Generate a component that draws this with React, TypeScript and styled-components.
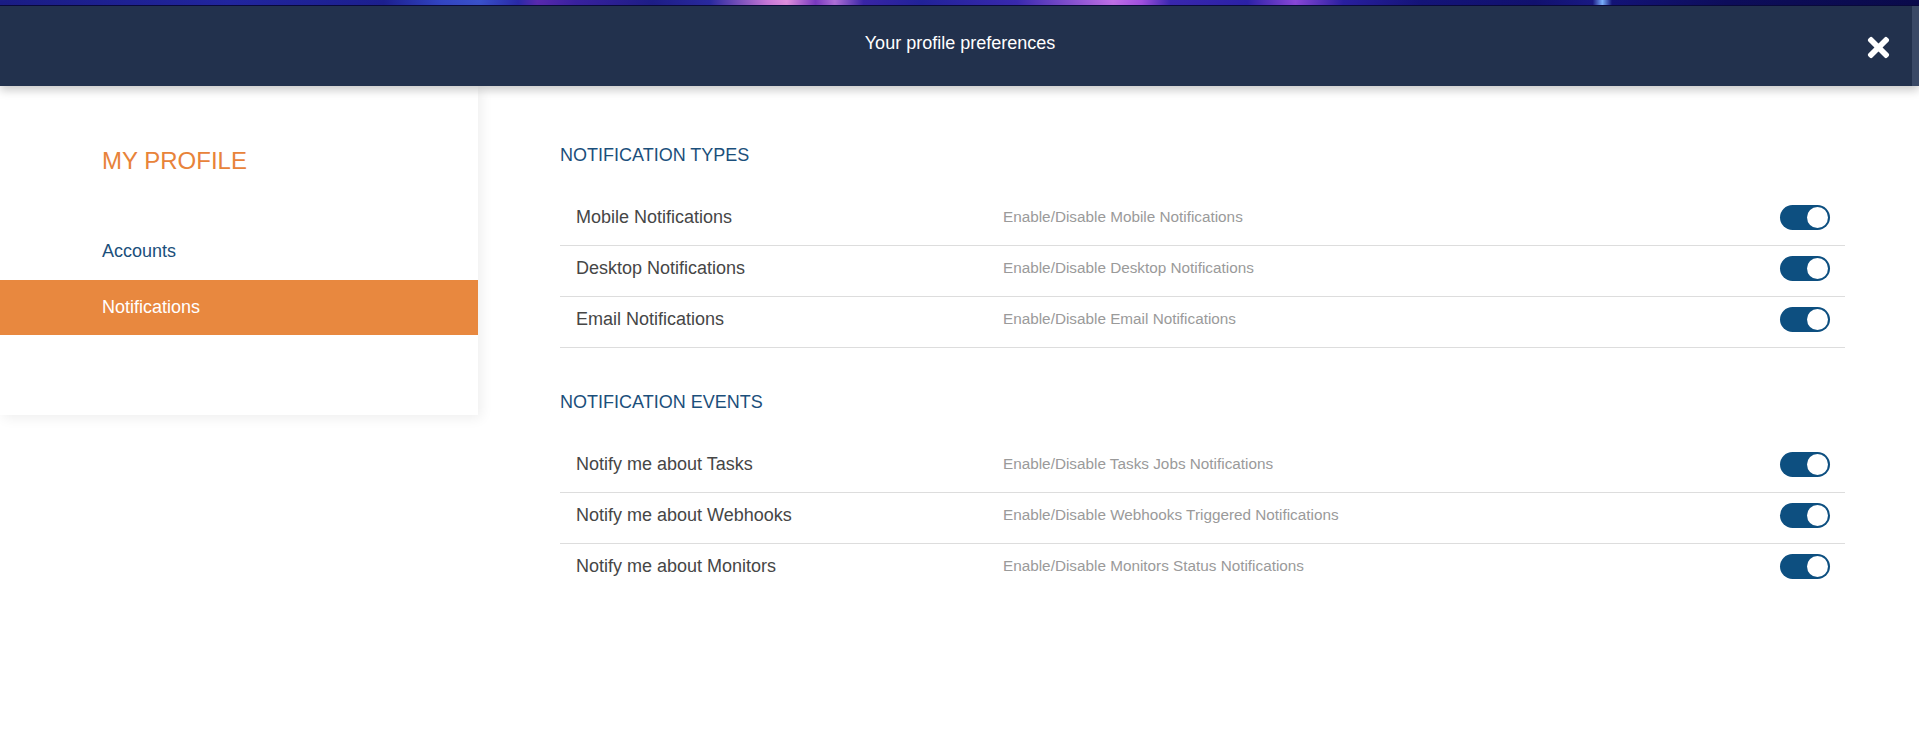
import React, { useState } from "react";
import styled, { createGlobalStyle } from "styled-components";
import { FaTimes } from "react-icons/fa";

const GlobalStyle = createGlobalStyle`
  html, body {
    margin: 0;
    padding: 0;
    background: #ffffff;
    font-family: "Liberation Sans", Arial, sans-serif;
  }
  * { box-sizing: border-box; }
`;

const Page = styled.div`
  width: 1919px;
  min-height: 733px;
  background: #ffffff;
  overflow: hidden;
`;

const BackdropStrip = styled.div`
  height: 6px;
  background: linear-gradient(
    90deg,
    #1b1d86 0%,
    #2226a0 12%,
    #1d2090 20%,
    #3346c4 23%,
    #3a52cc 25%,
    #2a2aa8 27%,
    #5a2ab0 28%,
    #3a22a0 30%,
    #1e1e88 34%,
    #2a2aa0 37%,
    #c878d8 40%,
    #e090e0 41%,
    #7a3ac0 42.5%,
    #b070d8 43.5%,
    #3a26a8 45%,
    #22239a 48%,
    #3a2ab0 53%,
    #c070e8 58%,
    #a050e0 59.5%,
    #3a28b0 61%,
    #2c22a8 65%,
    #8a48d8 67.5%,
    #2a20a0 70%,
    #15157a 74%,
    #121270 80%,
    #1a1a84 83%,
    #7ab0ff 83.5%,
    #141478 84%,
    #0e0e5c 90%,
    #0b0b4c 100%
  );
  border-bottom: 1px solid #0a0a3e;
`;

const HeaderBar = styled.header`
  position: relative;
  z-index: 2;
  display: grid;
  grid-template-columns: 1fr 7px;
  height: 80px;
  box-shadow: 0 4px 9px rgba(0, 0, 0, 0.22);
`;

const HeaderInner = styled.div`
  display: grid;
  grid-template-columns: 1fr auto 1fr;
  align-items: center;
  background: #22314d;
  padding: 0 18px 0 26px;
`;

const HeaderTitle = styled.h1`
  grid-column: 2;
  margin: 0 0 6px;
  font-size: 18px;
  line-height: 22px;
  font-weight: 400;
  color: #ffffff;
`;

const CloseButton = styled.button`
  grid-column: 3;
  justify-self: end;
  display: flex;
  align-items: center;
  justify-content: center;
  margin-top: 2px;
  padding: 0;
  border: none;
  background: transparent;
  color: #ffffff;
  cursor: pointer;
`;

const ScrollEdge = styled.div`
  background: #3a4966;
`;

const Body = styled.div`
  display: flex;
  align-items: flex-start;
`;

const Sidebar = styled.aside`
  position: relative;
  z-index: 1;
  width: 478px;
  height: 329px;
  padding-top: 61px;
  background: #ffffff;
  box-shadow: 3px 3px 12px rgba(0, 0, 0, 0.07);
`;

const SidebarTitle = styled.h2`
  margin: 0 0 50px;
  padding-left: 102px;
  font-size: 24px;
  line-height: 28px;
  font-weight: 400;
  color: #e8833a;
`;

const NavList = styled.nav`
  display: flex;
  flex-direction: column;
`;

const NavItem = styled.a<{ $active?: boolean }>`
  display: block;
  height: 55px;
  padding-left: 102px;
  font-size: 18px;
  line-height: ${(p) => (p.$active ? "54px" : "52px")};
  text-decoration: none;
  cursor: pointer;
  color: ${(p) => (p.$active ? "#ffffff" : "#1b4f7b")};
  background: ${(p) => (p.$active ? "#e8883f" : "transparent")};
`;

const Main = styled.main`
  width: 1285px;
  margin-left: 82px;
  padding-top: 58px;
`;

const Section = styled.section<{ $spaced?: boolean }>`
  margin-top: ${(p) => (p.$spaced ? "43px" : "0")};
`;

const SectionTitle = styled.h3`
  margin: 0 0 29px;
  font-size: 18px;
  line-height: 22px;
  font-weight: 400;
  color: #1b4f7b;
`;

const RowList = styled.div<{ $trailingRule?: boolean }>`
  display: flex;
  flex-direction: column;

  & > div:last-child {
    border-bottom-color: ${(p) => (p.$trailingRule ? "#dddddd" : "transparent")};
  }
`;

const Row = styled.div`
  display: grid;
  grid-template-columns: 427px 1fr 50px;
  align-items: center;
  height: 51px;
  padding: 0 15px 6px 16px;
  border-bottom: 1px solid #dddddd;
`;

const RowLabel = styled.span`
  font-size: 18px;
  line-height: 22px;
  color: #464646;
`;

const RowHint = styled.span`
  font-size: 15.3px;
  line-height: 18px;
  color: #9a9a9a;
`;

const ToggleTrack = styled.button<{ $on: boolean }>`
  display: flex;
  align-items: center;
  justify-content: ${(p) => (p.$on ? "flex-end" : "flex-start")};
  width: 50px;
  height: 25px;
  padding: 2px;
  border: none;
  border-radius: 13px;
  background: ${(p) => (p.$on ? "#0d4f80" : "#c8c8c8")};
  cursor: pointer;
`;

const ToggleKnob = styled.span`
  display: block;
  width: 21px;
  height: 21px;
  border-radius: 50%;
  background: #ffffff;
`;

type Pref = { id: string; label: string; hint: string };

const types: Pref[] = [
  { id: "mobile", label: "Mobile Notifications", hint: "Enable/Disable Mobile Notifications" },
  { id: "desktop", label: "Desktop Notifications", hint: "Enable/Disable Desktop Notifications" },
  { id: "email", label: "Email Notifications", hint: "Enable/Disable Email Notifications" },
];

const events: Pref[] = [
  { id: "tasks", label: "Notify me about Tasks", hint: "Enable/Disable Tasks Jobs Notifications" },
  { id: "webhooks", label: "Notify me about Webhooks", hint: "Enable/Disable Webhooks Triggered Notifications" },
  { id: "monitors", label: "Notify me about Monitors", hint: "Enable/Disable Monitors Status Notifications" },
];

function Toggle({ on, onClick }: { on: boolean; onClick: () => void }) {
  return (
    <ToggleTrack type="button" $on={on} onClick={onClick} aria-pressed={on}>
      <ToggleKnob />
    </ToggleTrack>
  );
}

export default function App() {
  const [state, setState] = useState<Record<string, boolean>>({
    mobile: true,
    desktop: true,
    email: true,
    tasks: true,
    webhooks: true,
    monitors: true,
  });
  const flip = (id: string) => setState((s) => ({ ...s, [id]: !s[id] }));

  const renderRows = (items: Pref[]) =>
    items.map((it) => (
      <Row key={it.id}>
        <RowLabel>{it.label}</RowLabel>
        <RowHint>{it.hint}</RowHint>
        <Toggle on={state[it.id]} onClick={() => flip(it.id)} />
      </Row>
    ));

  return (
    <Page>
      <GlobalStyle />
      <BackdropStrip />
      <HeaderBar>
        <HeaderInner>
          <HeaderTitle>Your profile preferences</HeaderTitle>
          <CloseButton type="button" aria-label="Close">
            <FaTimes size={31} />
          </CloseButton>
        </HeaderInner>
        <ScrollEdge />
      </HeaderBar>
      <Body>
        <Sidebar>
          <SidebarTitle>MY PROFILE</SidebarTitle>
          <NavList>
            <NavItem>Accounts</NavItem>
            <NavItem $active>Notifications</NavItem>
          </NavList>
        </Sidebar>
        <Main>
          <Section>
            <SectionTitle>NOTIFICATION TYPES</SectionTitle>
            <RowList $trailingRule>{renderRows(types)}</RowList>
          </Section>
          <Section $spaced>
            <SectionTitle>NOTIFICATION EVENTS</SectionTitle>
            <RowList>{renderRows(events)}</RowList>
          </Section>
        </Main>
      </Body>
    </Page>
  );
}
